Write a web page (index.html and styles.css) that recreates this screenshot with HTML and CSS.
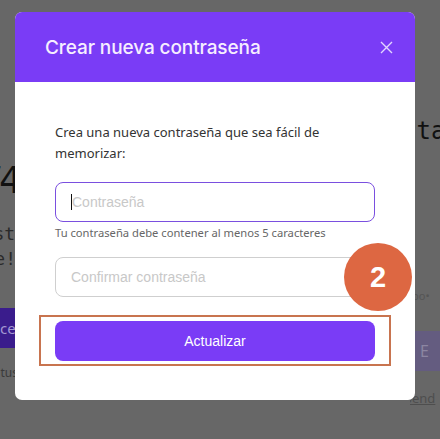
FILE: index.html
```html
<!DOCTYPE html>
<html lang="es">
<head>
<meta charset="utf-8">
<title>Crear nueva contraseña</title>
<link rel="stylesheet" href="styles.css">
</head>
<body>
<div class="page">
  <div class="bg-left">
    <div class="big-num">74</div>
    <div class="bg-line first">sta</div>
    <div class="bg-line">e!</div>
    <div class="bg-btn">ce</div>
    <div class="bg-small">tus</div>
  </div>
  <div class="bg-right">
    <div class="big-word">cta</div>
    <div class="bg-dots">po•</div>
    <div class="bg-btn2">E</div>
    <div class="bg-link">pend</div>
  </div>
</div>

<div class="modal">
  <div class="modal-header">
    <h2 class="modal-title">Crear nueva contraseña</h2>
    <svg class="close" width="13" height="13" viewBox="0 0 13 13"><path d="M1 1 L12 12 M12 1 L1 12" stroke="#e2d6ff" stroke-width="1.4" fill="none"/></svg>
  </div>
  <div class="modal-body">
    <p class="intro">Crea una nueva contraseña que sea fácil de memorizar:</p>
    <div class="field focused"><span class="caret"></span><span class="ph">Contraseña</span></div>
    <p class="help">Tu contraseña debe contener al menos 5 caracteres</p>
    <div class="field second"><span class="ph">Confirmar contraseña</span></div>
    <div class="highlight">
      <div class="btn">Actualizar</div>
    </div>
  </div>
</div>

<div class="badge">2</div>
</body>
</html>
```

FILE: styles.css
```css
html, body {
  margin: 0;
  padding: 0;
}
body {
  width: 440px;
  height: 439px;
  overflow: hidden;
  background: #676767;
  position: relative;
  font-family: "Noto Sans", "Liberation Sans", sans-serif;
}

/* dimmed background page */
.page {
  display: flex;
  justify-content: space-between;
  height: 439px;
}
.bg-left {
  width: 40px;
  display: flex;
  flex-direction: column;
  align-items: flex-end;
  padding-top: 160px;
  overflow: hidden;
}
.big-num {
  font-family: "DejaVu Sans Mono", monospace;
  font-size: 38px;
  line-height: 40px;
  color: #111;
  margin-right: 22px;
  letter-spacing: -4px;
}
.bg-line {
  font-family: "DejaVu Sans Mono", monospace;
  font-size: 18px;
  line-height: 25px;
  color: #2a2a2a;
  margin-right: 14px;
  white-space: nowrap;
}
.bg-line.first { margin-top: 21px; }
.bg-line + .bg-line { margin-right: 24px; }
.bg-btn {
  align-self: stretch;
  margin-top: 37px;
  height: 40px;
  background: #3a1c8c;
  color: #a397d2;
  font-size: 15px;
  line-height: 40px;
  text-align: right;
  padding-right: 25px;
}
.bg-small {
  margin-top: 16px;
  font-size: 12px;
  color: #3a3a3a;
  margin-right: 22px;
}
.bg-right {
  width: 30px;
  display: flex;
  flex-direction: column;
  padding-top: 116px;
  overflow: hidden;
}
.big-word {
  font-family: "DejaVu Sans Mono", monospace;
  font-size: 24px;
  line-height: 30px;
  color: #111;
  margin-left: -8px;
  white-space: nowrap;
}
.bg-dots {
  margin-top: 142px;
  font-size: 11px;
  color: #555;
  margin-left: 2px;
  white-space: nowrap;
}
.bg-btn2 {
  margin-top: 28px;
  height: 40px;
  background: #645c80;
  color: #8c86a2;
  font-size: 16px;
  line-height: 40px;
  padding-left: 10px;
}
.bg-link {
  margin-top: 18px;
  font-size: 13px;
  color: #4e4e4e;
  margin-left: -6px;
  white-space: nowrap;
  text-decoration: underline;
}

/* modal */
.modal {
  position: absolute;
  left: 15px;
  top: 12px;
  width: 400px;
  height: 388px;
  background: #fff;
  border-radius: 7px;
  overflow: hidden;
}
.modal-header {
  height: 70px;
  background: #7a3cf6;
  display: flex;
  align-items: center;
  justify-content: space-between;
  padding: 0 22px 0 30px;
}
.modal-title {
  margin: 0;
  font-family: Inter, "Liberation Sans", sans-serif;
  font-weight: 500;
  font-size: 19px;
  color: #f6eeff;
  letter-spacing: -0.1px;
}
.close {
  display: block;
}
.modal-body {
  padding: 40px 40px 0 40px;
}
.intro {
  margin: 0;
  font-size: 13px;
  line-height: 21px;
  color: #333;
  padding-right: 40px;
}
.field {
  margin-top: 18px;
  height: 40px;
  box-sizing: border-box;
  border: 1px solid #cfcfcf;
  border-radius: 8px;
  display: flex;
  align-items: center;
  padding-left: 15px;
  font-family: "Liberation Sans", Arial, sans-serif;
  font-size: 14px;
}
.field.focused {
  border-color: #7a4fdf;
}
.field.second {
  margin-top: 17px;
}
.caret {
  width: 1px;
  height: 16px;
  background: #111;
}
.ph {
  color: #c8c8c8;
}
.help {
  margin: 4px 0 0;
  font-size: 11.2px;
  line-height: 14px;
  color: #666;
}
.highlight {
  margin: 18px -16px 0;
  border: 2px solid #c8744f;
  padding: 4px 14px 3px;
}
.btn {
  height: 40px;
  background: #7a3cf6;
  border-radius: 8px;
  color: #fff;
  font-family: "Liberation Sans", Arial, sans-serif;
  font-size: 14px;
  display: flex;
  align-items: center;
  justify-content: center;
}

/* annotation badge */
.badge {
  position: absolute;
  left: 344px;
  top: 243px;
  width: 68px;
  height: 68px;
  border-radius: 50%;
  background: #dd6742;
  color: #fff;
  font-family: "Liberation Sans", Arial, sans-serif;
  font-weight: bold;
  font-size: 29px;
  display: flex;
  align-items: center;
  justify-content: center;
}
```
